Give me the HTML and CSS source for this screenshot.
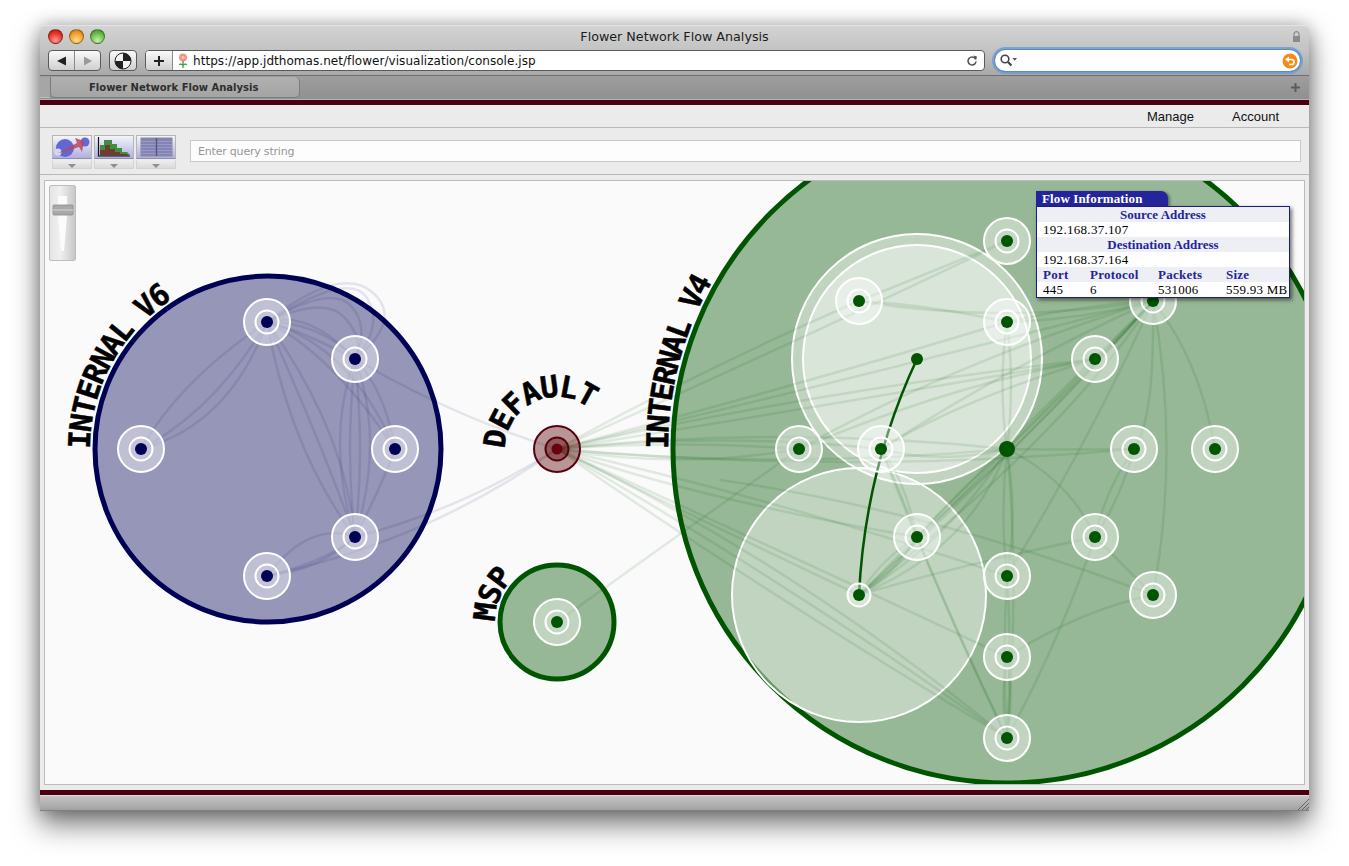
FILE: index.html
```html
<!DOCTYPE html>
<html lang="en">
<head>
<meta charset="utf-8">
<title>Flower Network Flow Analysis</title>
<link rel="stylesheet" href="styles.css">
</head>
<body>
<div class="window">
  <header class="titlebar">
    <div class="lights"><span class="light red"></span><span class="light amber"></span><span class="light green"></span></div>
    <div class="title">Flower Network Flow Analysis</div>
    <div class="lockbox">
      <svg width="9" height="11" viewBox="0 0 9 11"><path class="lock-loop" d="M2 5V3.2a2.5 2.5 0 0 1 5 0V5"/><rect class="lock-body" x="1" y="5" width="7" height="6" rx="0.5"/></svg>
    </div>
  </header>
  <div class="toolbar">
    <div class="navpair">
      <div class="navbtn"><svg width="10" height="10" viewBox="0 0 10 10"><path class="glyph-dark" d="M0 5 9 .5v9z"/></svg></div>
      <div class="navbtn"><svg width="10" height="10" viewBox="0 0 10 10"><path class="glyph-faint" d="M9 5 1 .5v9z"/></svg></div>
    </div>
    <div class="roundbtn">
      <svg width="18" height="18" viewBox="0 0 18 18"><circle class="ball" cx="9" cy="9" r="8"/><path class="glyph-dark" d="M9 9V1a8 8 0 0 1 8 8zM9 9v8a8 8 0 0 1-8-8z"/></svg>
    </div>
    <div class="address">
      <div class="addbtn"><svg width="12" height="12" viewBox="0 0 12 12"><path class="plus" d="M6 1v10M1 6h10"/></svg></div>
      <div class="urlfield">
        <svg class="favicon" width="14" height="16" viewBox="0 0 14 16"><circle class="petal" cx="7" cy="4.5" r="4"/><circle class="petal-core" cx="7" cy="4.5" r="1.5"/><path class="stem" d="M7 8v7M7 12c-2-1.500-3-1-4-.5M7 12c2-1.500 3-1 4-.5"/></svg>
        <span class="url">https://app.jdthomas.net/flower/visualization/console.jsp</span>
        <svg class="reload" width="12" height="12" viewBox="0 0 12 12"><path class="reload-arc" d="M9.500 4A4 4 0 1 0 10 6.500"/><path class="reload-tip" d="M7.500 .5 11 1.500 10 5.500z"/></svg>
      </div>
    </div>
    <div class="search">
      <svg width="17" height="13" viewBox="0 0 17 13"><circle class="mag" cx="5" cy="5" r="3.800"/><path class="mag-h" d="M8 8l3.500 3.500"/><path class="glyph-mid" d="M12.500 4h4.500l-2.250 2.800z"/></svg>
      <svg class="snapback" width="16" height="16" viewBox="0 0 16 16"><circle class="snap" cx="8" cy="8" r="7.500"/><path class="snap-arrow" d="M5.500 6.500h4a2.500 2.500 0 0 1 0 5H7"/><path class="snap-tip" d="M7 3.500v6L3 6.500z"/></svg>
    </div>
  </div>
  <div class="tabbar">
    <div class="tabstub"></div>
    <div class="tab">Flower Network Flow Analysis</div>
    <div class="tabfill"></div>
    <svg class="newtab" width="9" height="9" viewBox="0 0 9 9"><path class="newtab-plus" d="M4.500 0v9M0 4.500h9"/></svg>
  </div>
  <div class="redbar"></div>
  <nav class="menu"><a>Manage</a><a>Account</a></nav>
  <div class="tools">
    <div class="tool">
      <div class="toolface">
        <svg width="38" height="22" viewBox="0 0 38 22"><circle class="i-blue" cx="12" cy="12" r="9"/><circle class="i-blue" cx="32" cy="6" r="4.500"/><circle class="i-pale" cx="5" cy="16" r="3.500"/><path class="i-red" d="M5 17 24 7l-2-5 9 3-2 11-3-5-12 4z"/></svg>
      </div>
      <div class="toolmenu"><span class="caret"></span></div>
    </div>
    <div class="tool">
      <div class="toolface">
        <svg width="38" height="22" viewBox="0 0 38 22"><path class="i-green" d="M5 9h4V4h8v4h5v4h5v4h5l3 3H5z"/><path class="i-brown" d="M5 14h5V9h5v4h5v3h5v2h6l3 1.500H5z"/><path class="i-axis" d="M3.500 1v19H35"/></svg>
      </div>
      <div class="toolmenu"><span class="caret"></span></div>
    </div>
    <div class="tool">
      <div class="toolface">
        <svg width="38" height="22" viewBox="0 0 38 22"><rect class="i-table" x="4" y="2" width="31" height="18"/><path class="i-rows" d="M4 5.500h31M4 8.500h31M4 11.500h31M4 14.500h31M4 17.500h31"/><path class="i-cols" d="M19.500 2v18"/></svg>
      </div>
      <div class="toolmenu"><span class="caret"></span></div>
    </div>
    <div class="query">Enter query string</div>
  </div>
  <main class="stage">
    <div class="canvas">
      <svg class="graph" width="1259" height="603" viewBox="45 181 1259 603">
        <defs>
          <path id="arc-v6" d="M90 449A178 178 0 1 1 446 449"/>
          <path id="arc-v4" d="M668 449A339 339 0 0 1 1346 449"/>
          <path id="arc-def" d="M505 449A52 52 0 1 1 609 449"/>
          <path id="arc-msp" d="M495 622A62 62 0 1 1 619 622"/>
          <g id="node-b"><circle class="halo" r="23"/><circle class="halo-in" r="11.500"/><circle class="dot-b" r="6"/></g>
          <g id="node-g"><circle class="halo" r="23"/><circle class="halo-in" r="11.500"/><circle class="dot-g" r="6"/></g>
        </defs>

        <circle class="group-b" cx="268" cy="449" r="173"/>
        <circle class="group-g" cx="1007" cy="449" r="334"/>
        <circle class="group-g" cx="557" cy="622" r="57"/>

        <circle class="sub" cx="917" cy="359" r="125"/>
        <circle class="sub" cx="917" cy="359" r="114"/>
        <circle class="sub" cx="859" cy="595" r="127"/>

        <g class="edges-b">
          <path d="M267 322Q340 265 372 292T355 359"/>
          <path d="M267 322Q350 270 367 298T355 359"/>
          <path d="M267 322Q330 285 350 305T355 359"/>
          <path d="M267 322Q325 295 345 318T355 359"/>
          <path d="M267 322Q310 310 355 359"/>
          <path d="M267 322Q320 322 355 359"/>
          <path d="M267 322Q300 330 355 359"/>
          <path d="M267 322Q330 352 395 449"/>
          <path d="M267 322Q350 345 395 449"/>
          <path d="M267 322Q180 380 141 449"/>
          <path d="M267 322Q230 425 141 449"/>
          <path d="M267 322Q215 410 141 449"/>
          <path d="M267 322Q290 450 355 537"/>
          <path d="M267 322Q320 440 355 537"/>
          <path d="M267 322Q345 430 355 537"/>
          <path d="M355 359Q345 450 355 537"/>
          <path d="M355 359Q365 450 355 537"/>
          <path d="M355 359Q385 440 355 537"/>
          <path d="M355 359Q325 440 355 537"/>
          <path d="M395 449Q380 490 355 537"/>
          <path d="M395 449Q385 390 355 359"/>
          <path d="M267 576Q310 520 355 537"/>
          <path d="M267 576Q320 570 355 537"/>
          <path d="M267 576Q330 560 355 537"/>
          <path d="M355 359Q450 415 557 449"/>
          <path d="M355 537Q460 510 557 449"/>
          <path d="M267 576Q430 540 557 449"/>
        </g>

        <g class="edges-g">
          <path d="M557 449Q700 370 859 301"/>
          <path d="M557 449Q800 340 1007 241"/>
          <path d="M557 449Q800 385 1007 322"/>
          <path d="M557 449Q850 380 1153 301"/>
          <path d="M557 449Q820 390 1095 359"/>
          <path d="M557 449Q800 410 1095 359"/>
          <path d="M557 449Q680 440 799 449"/>
          <path d="M557 449Q680 470 799 449"/>
          <path d="M557 449Q720 432 881 449"/>
          <path d="M557 449Q780 425 1007 449"/>
          <path d="M557 449Q780 470 1007 449"/>
          <path d="M557 449Q850 475 1134 449"/>
          <path d="M557 449Q700 500 917 537"/>
          <path d="M557 449Q780 500 1007 576"/>
          <path d="M557 449Q790 555 1007 657"/>
          <path d="M557 449Q790 560 1007 738"/>
          <path d="M557 449Q800 590 1007 738"/>
          <path d="M557 449Q760 590 1007 738"/>
          <path d="M557 449Q700 520 859 595"/>
          <path d="M557 622L799 449"/>

          <path d="M1153 301Q960 360 799 449"/>
          <path d="M1153 301Q1020 360 881 449"/>
          <path d="M1153 301Q1030 420 917 537"/>
          <path d="M1153 301Q1050 420 917 537"/>
          <path d="M1153 301Q1000 470 859 595"/>
          <path d="M1153 301Q1060 440 859 595"/>
          <path d="M1153 301Q1070 385 1007 449"/>
          <path d="M1153 301Q1100 360 1007 449"/>
          <path d="M1153 301Q1155 420 1134 449"/>
          <path d="M1153 301Q1200 360 1215 449"/>
          <path d="M1153 301Q1180 450 1153 595"/>
          <path d="M1153 301Q1090 440 1007 576"/>
          <path d="M1153 301Q1000 325 859 301"/>
          <path d="M1153 301Q1080 320 1007 322"/>
          <path d="M1153 301Q1080 305 1007 322"/>
          <path d="M1153 301Q1120 340 1095 359"/>

          <path d="M1007 322Q998 385 1007 449"/>
          <path d="M1007 322Q1015 385 1007 449"/>
          <path d="M1007 449Q1070 450 1134 449"/>
          <path d="M1007 449Q940 465 881 449"/>
          <path d="M1007 449Q1070 480 1095 537"/>
          <path d="M1007 449Q1000 515 1007 576"/>
          <path d="M1007 449Q1018 515 1007 576"/>
          <path d="M1007 449Q1020 580 1007 738"/>
          <path d="M1007 449Q960 490 917 537"/>
          <path d="M1007 449Q930 530 859 595"/>
          <path d="M1007 449Q950 540 859 595"/>
          <path d="M1007 449Q970 550 859 595"/>
          <path d="M1095 359Q960 400 881 449"/>
          <path d="M1095 359Q950 385 799 449"/>
          <path d="M1095 537Q1120 500 1134 449"/>
          <path d="M1095 537Q1105 490 1134 449"/>

          <path d="M859 595Q880 560 917 537"/>
          <path d="M859 595Q895 575 917 537"/>
          <path d="M859 595Q900 565 917 537"/>
          <path d="M859 595L917 537"/>
          <path d="M859 595Q960 565 1095 537"/>
          <path d="M859 301Q930 305 1007 322"/>
          <path d="M859 301L1007 241"/>
          <path d="M917 537Q900 490 881 449"/>
          <path d="M917 537Q905 480 881 449"/>
          <path d="M917 537Q960 640 1007 738"/>
          <path d="M881 449Q940 600 1007 738"/>
          <path d="M720 480Q930 510 1153 595"/>
          <path d="M1095 537L1153 595"/>
          <path d="M1007 738Q1002 655 1007 576"/>
          <path d="M1007 738Q1012 650 1007 576"/>
          <path d="M1007 738Q1000 700 1007 657"/>
          <path d="M1007 738Q1014 700 1007 657"/>
          <path d="M1007 738Q1060 640 1095 537"/>
          <path d="M1007 657Q1080 610 1153 595"/>
        </g>

        <path class="flow" d="M917 359Q865 470 859 595"/>

        <use href="#node-b" x="267" y="322"/>
        <use href="#node-b" x="355" y="359"/>
        <use href="#node-b" x="141" y="449"/>
        <use href="#node-b" x="395" y="449"/>
        <use href="#node-b" x="355" y="537"/>
        <use href="#node-b" x="267" y="576"/>

        <circle class="def-ring" cx="557" cy="449" r="23"/>
        <circle class="def-ring" cx="557" cy="449" r="11.500"/>
        <circle class="def-dot" cx="557" cy="449" r="5.500"/>

        <use href="#node-g" x="557" y="622"/>
        <use href="#node-g" x="1007" y="241"/>
        <use href="#node-g" x="859" y="301"/>
        <use href="#node-g" x="1007" y="322"/>
        <use href="#node-g" x="1095" y="359"/>
        <use href="#node-g" x="1153" y="301"/>
        <use href="#node-g" x="799" y="449"/>
        <use href="#node-g" x="881" y="449"/>
        <use href="#node-g" x="1134" y="449"/>
        <use href="#node-g" x="1215" y="449"/>
        <use href="#node-g" x="917" y="537"/>
        <use href="#node-g" x="1095" y="537"/>
        <use href="#node-g" x="1007" y="576"/>
        <use href="#node-g" x="1153" y="595"/>
        <use href="#node-g" x="1007" y="657"/>
        <use href="#node-g" x="1007" y="738"/>

        <circle class="halo" cx="859" cy="595" r="11.500"/>
        <circle class="dot-g" cx="859" cy="595" r="6"/>
        <circle class="dot-g" cx="917" cy="359" r="6"/>
        <circle class="dot-g" cx="1007" cy="449" r="8"/>

        <text class="label"><textPath href="#arc-v6">INTERNAL V6</textPath></text>
        <text class="label label-v4"><textPath href="#arc-v4">INTERNAL V4</textPath></text>
        <text class="label label-def"><textPath href="#arc-def">DEFAULT</textPath></text>
        <text class="label"><textPath href="#arc-msp">MSP</textPath></text>
      </svg>

      <div class="zoom">
        <svg width="27" height="76" viewBox="0 0 27 76"><path class="zoom-slot" d="M9 11h9v19l-3 36h-3l-3-36z"/><rect class="zoom-thumb" x="4" y="20" width="20" height="10" rx="1"/><path class="zoom-thumb-line" d="M4 25h20"/></svg>
      </div>

      <section class="flowinfo">
        <div class="flowtab">Flow Information</div>
        <div class="flowbody">
          <div class="fhead">Source Address</div>
          <div class="fval">192.168.37.107</div>
          <div class="fhead">Destination Address</div>
          <div class="fval">192.168.37.164</div>
          <div class="fgrid fgrid-head"><span>Port</span><span>Protocol</span><span>Packets</span><span>Size</span></div>
          <div class="fgrid"><span>445</span><span>6</span><span>531006</span><span>559.93 MB</span></div>
        </div>
      </section>
    </div>
  </main>
  <div class="redbar"></div>
  <footer class="status">
    <svg width="12" height="12" viewBox="0 0 12 12"><path class="grip" d="M1 12 12 1M5 12l7-7M9 12l3-3"/></svg>
  </footer>
</div>
</body>
</html>
```
FILE: styles.css
```css
* { box-sizing: border-box; }
html, body { margin: 0; height: 100%; background: #fff; }
body { overflow: hidden; font-family: "Liberation Sans", Arial, sans-serif; }

.window {
  width: 1269px;
  height: 786px;
  margin: 25px 0 0 40px;
  display: flex;
  flex-direction: column;
  background: #ebebeb;
  border-radius: 5px 5px 0 0;
  box-shadow: 0 14px 28px rgba(0,0,0,.5), 0 0 18px rgba(0,0,0,.28);
}

/* title bar */
.titlebar {
  height: 25px;
  display: grid;
  grid-template-columns: 1fr auto 1fr;
  align-items: center;
  padding: 0 8px 4px;
  background: linear-gradient(#d3d3d3, #c3c3c3);
  border-top: 1px solid #e4e4e4;
  border-radius: 5px 5px 0 0;
}
.lights { display: flex; gap: 6px; }
.light { width: 15px; height: 15px; border-radius: 50%; border: 1px solid rgba(0,0,0,.35); }
.red { background: radial-gradient(circle at 50% 80%, #ff9a8c 0, #e8392e 55%, #b3140e 100%); }
.amber { background: radial-gradient(circle at 50% 80%, #ffdf8a 0, #f5a030 55%, #c66d0b 100%); }
.green { background: radial-gradient(circle at 50% 80%, #c9f0a0 0, #6cbe50 55%, #3a8a26 100%); }
.title { font: 12.7px "DejaVu Sans", sans-serif; color: #1c1c1c; }
.lockbox { display: flex; justify-content: flex-end; }
.lock-loop { fill: none; stroke: #8a8a8a; stroke-width: 1.2; }
.lock-body { fill: #8a8a8a; }

/* toolbar */
.toolbar {
  height: 26px;
  display: flex;
  align-items: flex-start;
  padding-left: 8px;
  background: linear-gradient(#c3c3c3, #a9a9a9);
  border-bottom: 1px solid #6f6f6f;
}
.navpair { display: flex; width: 53px; height: 21px; border: 1px solid #5a5a5a; border-radius: 4px; background: linear-gradient(#fafafa, #cfcfcf); }
.navbtn { flex: 1; display: flex; align-items: center; justify-content: center; }
.navbtn + .navbtn { border-left: 1px solid #8a8a8a; }
.glyph-dark { fill: #222; }
.glyph-faint { fill: #9a9a9a; }
.glyph-mid { fill: #555; }
.roundbtn { width: 28px; height: 21px; margin-left: 8px; border: 1px solid #5a5a5a; border-radius: 4px; background: linear-gradient(#fafafa, #cfcfcf); display: flex; align-items: center; justify-content: center; }
.ball { fill: #f2f2f2; stroke: #222; stroke-width: 1; }
.address { width: 840px; height: 21px; margin-left: 8px; display: flex; border: 1px solid #5a5a5a; border-radius: 4px; background: #fff; overflow: hidden; }
.addbtn { width: 27px; flex: none; border-right: 1px solid #8a8a8a; background: linear-gradient(#fafafa, #cfcfcf); display: flex; align-items: center; justify-content: center; }
.plus { fill: none; stroke: #222; stroke-width: 2; }
.urlfield { flex: 1; display: flex; align-items: center; padding: 0 6px 0 3px; }
.favicon { flex: none; }
.petal { fill: #f4928c; }
.petal-core { fill: #fbd2a8; }
.stem { fill: none; stroke: #3c9a3c; stroke-width: 1.300; }
.url { margin-left: 3px; flex: 1; font: 12px "DejaVu Sans", sans-serif; color: #111; letter-spacing: .05px; white-space: nowrap; }
.reload { flex: none; }
.reload-arc { fill: none; stroke: #555; stroke-width: 1.600; }
.reload-tip { fill: #555; }
.search {
  width: 305px;
  height: 21px;
  margin-left: 10px;
  display: flex;
  align-items: center;
  justify-content: space-between;
  padding: 0 2px 0 5px;
  background: #fff;
  border-radius: 11px;
  box-shadow: 0 0 0 1px #5a8cc0, 0 0 0 3px rgba(104,155,210,.8);
}
.mag { fill: none; stroke: #444; stroke-width: 1.600; }
.mag-h { fill: none; stroke: #444; stroke-width: 2.200; }
.snap { fill: #f68a12; }
.snap-arrow { fill: none; stroke: #fff; stroke-width: 1.700; }
.snap-tip { fill: #fff; }

/* tabs */
.tabbar { height: 24px; display: flex; align-items: stretch; padding: 1px 0; background: linear-gradient(#9e9e9e, #909090); border-bottom: 1px solid #b4b4b4; position: relative; }
.tabstub { width: 10px; background: #a6a6a6; border-bottom: 1px solid #bcbcbc; }
.tab {
  width: 250px;
  padding-left: 38px;
  font: bold 10px/21px "DejaVu Sans", sans-serif;
  color: #2e2e2e;
  background: linear-gradient(#b0b0b0, #a4a4a4);
  border: 1px solid #7c7c7c;
  border-top: 0;
  border-radius: 0 5px 5px 5px;
}
.tabfill { flex: 1; }
.newtab { position: absolute; right: 9px; top: 7px; }
.newtab-plus { fill: none; stroke: #5c5c5c; stroke-width: 2; }
.redbar { height: 5px; flex: none; background: #4a0011; }

/* menu */
.menu { height: 23px; display: flex; justify-content: flex-end; align-items: center; gap: 38px; padding-right: 30px; font-size: 13px; color: #111; background: #ebebeb; border-bottom: 1px solid #b9b9b9; }

/* tools */
.tools { height: 47px; display: flex; align-items: flex-start; gap: 2px; padding: 7px 8px 0 12px; background: #ebebeb; border-bottom: 1px solid #b9b9b9; }
.tool { width: 40px; flex: none; }
.toolface { height: 24px; display: flex; align-items: center; justify-content: center; border: 1px solid #b5b5b5; border-bottom-color: #8f8fb5; background: linear-gradient(#f4f4fb, #b0b0dd); }
.toolmenu { height: 9px; margin-top: 1px; display: flex; justify-content: center; padding-top: 3px; border: 1px solid #d2d2d2; border-top-color: #ececec; border-radius: 0 0 1px 1px; background: linear-gradient(#ececec, #dadada); }
.caret { width: 0; height: 0; border: 4px solid transparent; border-top: 4px solid #8f8f8f; border-bottom: 0; }
.i-blue { fill: #6267d6; }
.i-pale { fill: #d6d6f2; }
.i-red { fill: #b8485c; opacity: .85; }
.i-green { fill: #3f8f3f; }
.i-brown { fill: #6f3c30; }
.i-axis { fill: none; stroke: #111; stroke-width: 1.200; }
.i-table { fill: #8484b4; stroke: #8a8a9a; }
.i-rows { fill: none; stroke: #9a9ac6; stroke-width: 1; }
.i-cols { fill: none; stroke: #55557a; stroke-width: 1.400; }
.query {
  flex: 1;
  height: 22px;
  margin: 5px 0 0 12px;
  padding-left: 7px;
  font: 11px/22px "DejaVu Sans", sans-serif;
  letter-spacing: -.2px;
  color: #969696;
  background: #fdfdfd;
  border: 1px solid #c8c8c8;
}

/* stage */
.stage { height: 615px; flex: none; padding: 5px 4px; background: #ebebeb; }
.canvas { position: relative; height: 605px; background: #fafafa; border: 1px solid #bcbcbc; overflow: hidden; }
.graph { display: block; }

.group-b { fill: rgba(0,0,85,.4); stroke: #000055; stroke-width: 5; }
.group-g { fill: rgba(0,85,0,.4); stroke: #005500; stroke-width: 5; }
.sub { fill: rgba(255,255,255,.4); stroke: #fff; stroke-width: 2; }
.halo { fill: rgba(255,255,255,.4); stroke: #fff; stroke-width: 2; }
.halo-in { fill: rgba(255,255,255,.08); stroke: #fff; stroke-width: 2; }
.dot-b { fill: #000055; }
.dot-g { fill: #005500; }
.def-ring { fill: rgba(85,0,0,.4); stroke: #5a0010; stroke-width: 2; }
.def-dot { fill: #6a0010; }
.edges-b path { fill: none; stroke: #000055; stroke-opacity: .09; stroke-width: 2.500; }
.edges-g path { fill: none; stroke: #005500; stroke-opacity: .1; stroke-width: 2.500; }
.flow { fill: none; stroke: #005500; stroke-width: 2.500; }
.label { font: bold 30px "DejaVu Sans Mono", monospace; letter-spacing: -2px; fill: #000; stroke: #000; stroke-width: .5px; }
.label-v4 { letter-spacing: -2.300px; }
.label-def { letter-spacing: -1.500px; }

/* zoom slider */
.zoom { position: absolute; left: 4px; top: 4px; width: 27px; height: 76px; border: 1px solid #bdbdbd; border-radius: 2px; background: linear-gradient(90deg, #e4e4e4, #f0f0f0 40%, #c8c8c8); }
.zoom svg { display: block; margin: -1px; }
.zoom-slot { fill: #fbfbfb; }
.zoom-thumb { fill: #a9a9a9; stroke: #8a8a8a; stroke-width: .8; }
.zoom-thumb-line { fill: none; stroke: #c8c8c8; stroke-width: 1.500; }

/* flow information */
.flowinfo { position: absolute; left: 991px; top: 10px; width: 254px; font: 13px/15px "Liberation Serif", "Times New Roman", serif; color: #000; }
.flowtab { width: 132px; height: 15px; padding-left: 6px; font-weight: bold; letter-spacing: .12px; line-height: 15px; color: #fff; background: #25259b; border-radius: 0 7px 0 0; box-shadow: 2px 1px 3px rgba(0,0,0,.4); }
.flowbody { height: 92px; background: #fff; border: 1px solid #1d1d8a; box-shadow: 2px 2px 4px rgba(0,0,0,.55); }
.fhead { text-align: center; font-weight: bold; color: #25259b; background: #eeeef5; }
.fval { padding-left: 6px; letter-spacing: .3px; }
.fgrid { display: grid; grid-template-columns: 47px 68px 68px 1fr; padding-left: 6px; letter-spacing: .25px; white-space: nowrap; }
.fgrid-head { font-weight: bold; color: #25259b; background: #eeeef5; }

/* status */
.status { height: 16px; flex: none; display: flex; justify-content: flex-end; align-items: flex-end; background: linear-gradient(#c4c4c4, #a2a2a2); border-top: 1px solid #dcdcdc; border-bottom: 1px solid #808080; }
.grip { fill: none; stroke: #666; stroke-width: 1; }
```
